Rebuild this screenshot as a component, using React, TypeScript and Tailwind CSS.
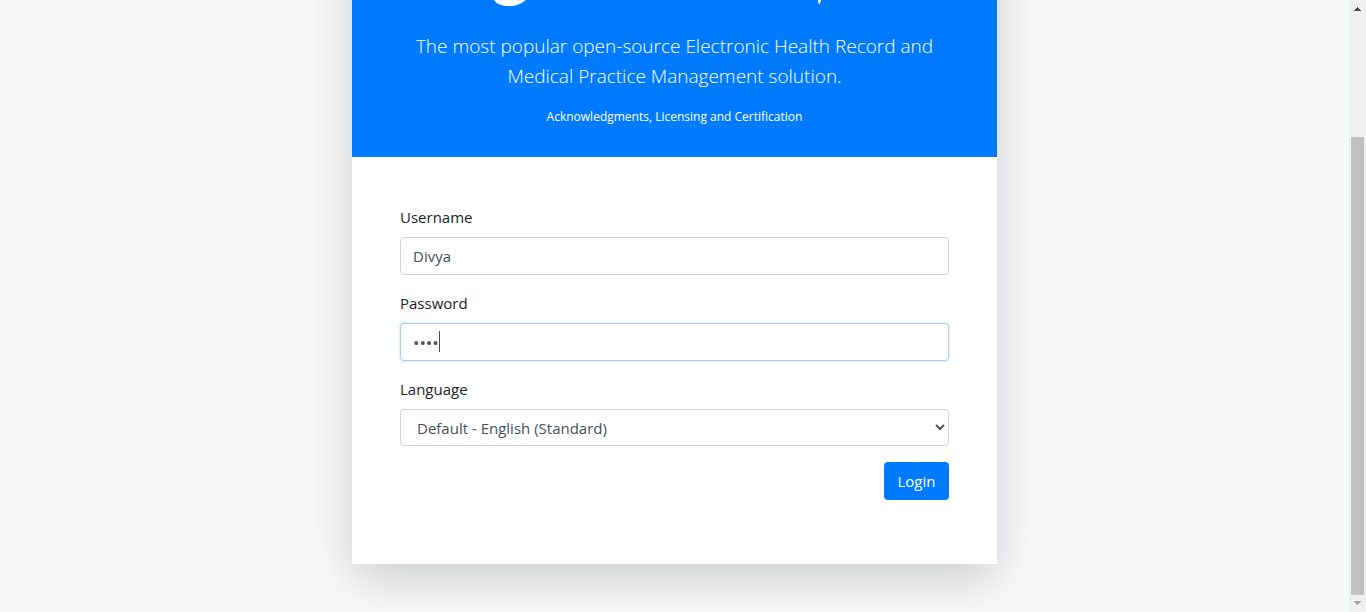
import { useState } from "react";

const field =
  "block w-full rounded border bg-white leading-6 text-[#495057] outline-none";

function Logo() {
  return (
    <svg
      className="mx-auto block"
      width="549"
      height="104"
      viewBox="0 -96 549 104"
      fill="#fff"
      aria-hidden="true"
    >
      <path d="M92 -4C94 3 100 6 109 6C118 6 124 3 129 -4Z" />
      <path d="M418 -4H421V1L419.500 4H419L418 2Z" />
    </svg>
  );
}

function Scrollbar() {
  return (
    <div className="flex w-[17px] shrink-0 flex-col items-center bg-[#f0f0f0]" aria-hidden="true">
      <svg className="block shrink-0" width="17" height="17" viewBox="0 0 17 17">
        <path
          d="M8 7h1v1H8zM7 8h3v1H7zM6 9h5v1H6zM5 10h7v1H5z"
          fill="#505050"
          shapeRendering="crispEdges"
        />
      </svg>
      <div className="flex min-h-0 w-[13px] flex-1 flex-col">
        <div className="flex-[120]" />
        <div className="flex-[458] bg-[#c1c1c1]" />
      </div>
      <svg className="block shrink-0" width="17" height="17" viewBox="0 0 17 17">
        <path
          d="M5 6h7v1H5zM6 7h5v1H6zM7 8h3v1H7zM8 9h1v1H8z"
          fill="#a3a3a3"
          shapeRendering="crispEdges"
        />
      </svg>
    </div>
  );
}

export default function App() {
  const [user, setUser] = useState("Divya");
  const [pass, setPass] = useState("demo");

  return (
    <div className="flex h-screen overflow-hidden bg-[#f8f9fb] font-['Open_Sans',sans-serif] text-[15px] leading-6 text-[#212529]">
      <main className="min-w-0 flex-1 overflow-hidden">
        <div className="mx-auto -mt-24 w-full max-w-[645px] bg-white shadow-[0_16px_48px_rgba(0,0,0,0.175)]">
          <header className="bg-[#007bff] px-12 pb-[30px] text-center text-white">
            <Logo />
            <p className="mt-[23px] text-[19px] leading-[30px] font-light">
              The most popular open-source Electronic Health Record and Medical Practice
              Management solution.
            </p>
            <p className="mt-4 text-[12px] leading-5">
              <a href="#acknowledgments" className="font-medium">
                Acknowledgments, Licensing and Certification
              </a>
            </p>
          </header>
          <form className="p-12 pb-16" onSubmit={(e) => e.preventDefault()}>
            <div className="mb-4">
              <label htmlFor="user" className="mb-2 block">
                Username
              </label>
              <input
                id="user"
                value={user}
                onChange={(e) => setUser(e.target.value)}
                className={`${field} h-[38px] border-[#ced4da] px-3`}
              />
            </div>
            <div className="mb-4">
              <label htmlFor="pass" className="mb-2 block">
                Password
              </label>
              <div className="relative">
                <input
                  id="pass"
                  type="password"
                  value={pass}
                  onChange={(e) => setPass(e.target.value)}
                  className={`${field} h-[38px] border-[#a9cbee] px-3 text-[17px] shadow-[0_0_3px_rgba(0,123,255,0.25)]`}
                />
                <span className="absolute top-2 left-[39px] h-[21px] w-px bg-[#495057]" />
              </div>
            </div>
            <div className="mb-4">
              <label htmlFor="lang" className="mb-2 block">
                Language
              </label>
              <select id="lang" className={`${field} h-[37px] border-[#ced4da] pl-3`}>
                <option>Default - English (Standard)</option>
              </select>
            </div>
            <div className="flex justify-end">
              <button
                type="submit"
                className="h-[38px] min-w-[65px] rounded bg-[#007bff] px-3 text-white"
              >
                Login
              </button>
            </div>
          </form>
        </div>
      </main>
      <Scrollbar />
    </div>
  );
}
